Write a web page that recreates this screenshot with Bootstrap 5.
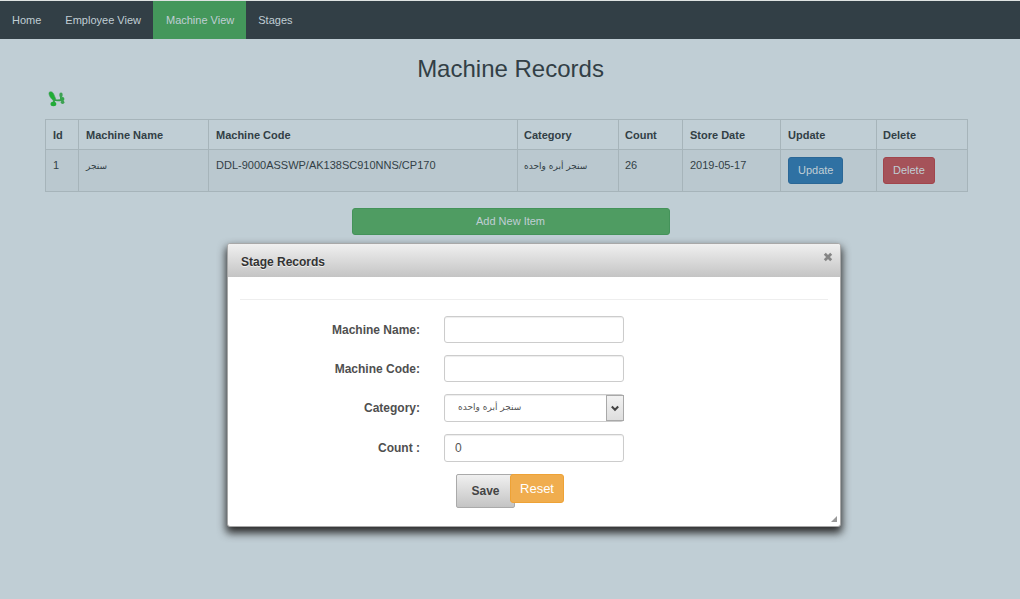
<!DOCTYPE html>
<html lang="en">
<head>
<meta charset="utf-8">
<meta name="viewport" content="width=device-width, initial-scale=1">
<title>Machine Records</title>
<link href="https://cdn.jsdelivr.net/npm/bootstrap@5.3.0/dist/css/bootstrap.min.css" rel="stylesheet">
<style>
body { background: #c0ced5; color: #323f46; font: 11px/16px "Liberation Sans", "DejaVu Sans", sans-serif; }
.topbar { background: #323f46; border-top: 1px solid #dfe3e2; }
.topbar .nav-link { color: #c0ced5; padding: 11px 12px; font-size: 11px; line-height: 16px; }
.topbar .nav-link.active { background: #44975b; padding-left: 13px; }
.page-wrap { padding: 16px 44px 16px 45px; }
.page-title { font-size: 24px; line-height: 28px; font-weight: 400; }
.leaf { width: 18px; height: 16px; margin: 8px 3px 12px; display: block; }
.records { margin-right: 9px; }
.records .table { table-layout: fixed; color: #323f46; border-color: #a6b4ba; --bs-table-bg: transparent; --bs-table-color: #323f46; }
.records th, .records td { padding: 7px; line-height: 17px; vertical-align: top; }
.records th { padding-bottom: 5px; }
.records th:nth-child(n+4), .records td:nth-child(n+4) { padding-left: 6px; }
.records th:nth-child(6), .records td:nth-child(6), .records th:nth-child(7), .records td:nth-child(7) { padding-left: 7px; }
.records tbody td { background: #bac8cf; }
.c-id { width: 33px; } .c-name { width: 130px; } .c-code { width: 309px; } .c-cat { width: 101px; }
.c-count { width: 64px; } .c-date { width: 98px; } .c-upd { width: 96px; } .c-del { width: 91px; }
.act { --bs-btn-color: #c0ced5; --bs-btn-hover-color: #fff; font-size: 11px; line-height: 15px; padding: 5px 9px; border-radius: 3px; display: block; }
.act-update { background: #2f71a3; border-color: #2b6796; }
.act-delete { background: #a55259; border-color: #a1454c; }
.act-add { background: #4f9c62; border-color: #44935a; width: 318px; }
.ar { font-family: "DejaVu Sans", sans-serif; font-size: 9px; }
.dlg { top: 243px; left: calc(50% - 283px); width: 614px; max-width: 100%; background: #fff; color: #4f4f4f; border: 1px solid #a8a8a8; border-radius: 3px; box-shadow: 0 5px 9px 1px #2b2b2b; font-size: 12px; }
.dlg-head { background: linear-gradient(#f0f0f0, #c4c4c4); padding: 10px 6px 7px 13px; height: 33px; border-radius: 2px 2px 0 0; }
.dlg-head h2 { font-size: 12px; line-height: 16px; font-weight: 700; color: #333; text-shadow: 0 1px 0 rgba(255,255,255,.7); }
.dlg-close { width: 12px; height: 12px; margin-top: -3px; }
.dlg-body { padding: 22px 12px 18px; }
.dlg-rule { border-top: 1px solid #eee; margin-bottom: 16px; }
.fields { display: grid; grid-template-columns: 180px 180px; column-gap: 24px; row-gap: 12px; align-items: center; }
.fields label { text-align: right; font-weight: 700; line-height: 16px; }
.fields .form-control, .fields .form-select { height: 27px; padding: 3px 10px; font-size: 12px; line-height: 16px; border: 1px solid #ccc; border-radius: 3px; color: #555; box-shadow: inset 0 1px 1px rgba(0,0,0,.075); }
.fields .tall { height: 28px; }
.fields .form-select { background: #fff; padding: 3px 30px 6px 13px; font-size: 9px; font-family: "DejaVu Sans", sans-serif; }
.arrow { top: 1px; right: 0; bottom: 1px; width: 18px; border: 1px solid #a9a9a9; background: linear-gradient(#f2f2f2, #dedede); pointer-events: none; }
.dlg-buttons { padding: 12px 0 0 216px; }
.save { width: 59px; height: 34px; border: 1px solid #aaa; border-radius: 2px; background: linear-gradient(#f0f0f0, #c4c4c4); font-size: 12px; line-height: 16px; font-weight: 700; color: #444; padding: 0; }
.reset { width: 54px; height: 29px; margin-left: -5px; padding: 0; background: #f0ad4e; border: 1px solid #eea236; border-radius: 3px; color: #fff; font-size: 13px; line-height: 18px; z-index: 1; }
.grip { right: 3px; bottom: 4px; width: 6px; height: 6px; }
</style>
</head>
<body>
<nav class="topbar d-flex">
  <a class="nav-link" href="#">Home</a>
  <a class="nav-link" href="#">Employee View</a>
  <a class="nav-link active" href="#" aria-current="page">Machine View</a>
  <a class="nav-link" href="#">Stages</a>
</nav>
<main class="page-wrap">
  <h1 class="page-title text-center m-0">Machine Records</h1>
  <svg class="leaf" viewBox="0 0 18 16" aria-hidden="true">
    <path d="M1 1.6C2.5-.2 5 .8 5.8 3.2L8 8.6 5.8 9.8C3.500 8.500.5 4.500 1 1.600Z" fill="#1fae34" stroke="#4f9a66" stroke-width=".6"/>
    <path d="M6 9c3 .8 5.500.6 9-.4M13 9 12.800 4.500M6.500 9.500 5 12" stroke="#37a04c" stroke-width="1.8" fill="none" stroke-linecap="round"/>
    <ellipse cx="5.400" cy="13" rx="2.900" ry="2.200" fill="#22ab38"/>
    <ellipse cx="13" cy="4" rx="1.700" ry="2.400" fill="#3da153"/>
    <ellipse cx="14.600" cy="8" rx="1.800" ry="2" fill="#32a548"/>
    <ellipse cx="14.600" cy="11.200" rx="1.800" ry="1.700" fill="#3da153"/>
  </svg>
  <div class="records">
    <table class="table table-bordered mb-3">
      <colgroup><col class="c-id"><col class="c-name"><col class="c-code"><col class="c-cat"><col class="c-count"><col class="c-date"><col class="c-upd"><col class="c-del"></colgroup>
      <thead><tr><th>Id</th><th>Machine Name</th><th>Machine Code</th><th>Category</th><th>Count</th><th>Store Date</th><th>Update</th><th>Delete</th></tr></thead>
      <tbody><tr>
        <td>1</td><td><span class="ar" lang="ar">سنجر</span></td><td>DDL-9000ASSWP/AK138SC910NNS/CP170</td><td><span class="ar" lang="ar">سنجر أبره واحده</span></td><td>26</td><td>2019-05-17</td>
        <td><button type="button" class="btn act act-update">Update</button></td>
        <td><button type="button" class="btn act act-delete">Delete</button></td>
      </tr></tbody>
    </table>
  </div>
  <button type="button" class="btn act act-add mx-auto">Add New Item</button>
</main>
<section class="dlg position-absolute" role="dialog" aria-labelledby="dlg-title">
  <header class="dlg-head d-flex justify-content-between align-items-start">
    <h2 id="dlg-title" class="m-0">Stage Records</h2>
    <button type="button" class="dlg-close border-0 bg-transparent p-0 d-flex" aria-label="Close">
      <svg width="12" height="12" viewBox="0 0 12 12"><path d="M3.800 3.800 8.200 8.200M8.200 3.800 3.800 8.200" stroke="#858585" stroke-width="2.800" stroke-linecap="square"/></svg>
    </button>
  </header>
  <form class="dlg-body">
    <div class="dlg-rule"></div>
    <div class="fields">
      <label for="m-name">Machine Name:</label><input id="m-name" class="form-control" type="text">
      <label for="m-code">Machine Code:</label><input id="m-code" class="form-control" type="text">
      <label for="m-cat">Category:</label>
      <div class="position-relative">
        <select id="m-cat" class="form-select tall"><option>سنجر أبره واحده</option></select>
        <span class="arrow position-absolute d-flex align-items-center justify-content-center"><svg width="8" height="7" viewBox="0 0 8 7"><path d="M.8 1.500 4 4.800 7.200 1.500" fill="none" stroke="#444" stroke-width="2"/></svg></span>
      </div>
      <label for="m-count">Count :</label><input id="m-count" class="form-control tall" type="text" value="0">
    </div>
    <div class="dlg-buttons d-flex align-items-start">
      <button type="button" class="save">Save</button>
      <button type="reset" class="reset position-relative">Reset</button>
    </div>
  </form>
  <svg class="grip position-absolute" viewBox="0 0 6 6" aria-hidden="true"><path d="M6 0V6H0Z" fill="#999"/></svg>
</section>
<script src="https://cdn.jsdelivr.net/npm/bootstrap@5.3.0/dist/js/bootstrap.bundle.min.js"></script>
</body>
</html>
